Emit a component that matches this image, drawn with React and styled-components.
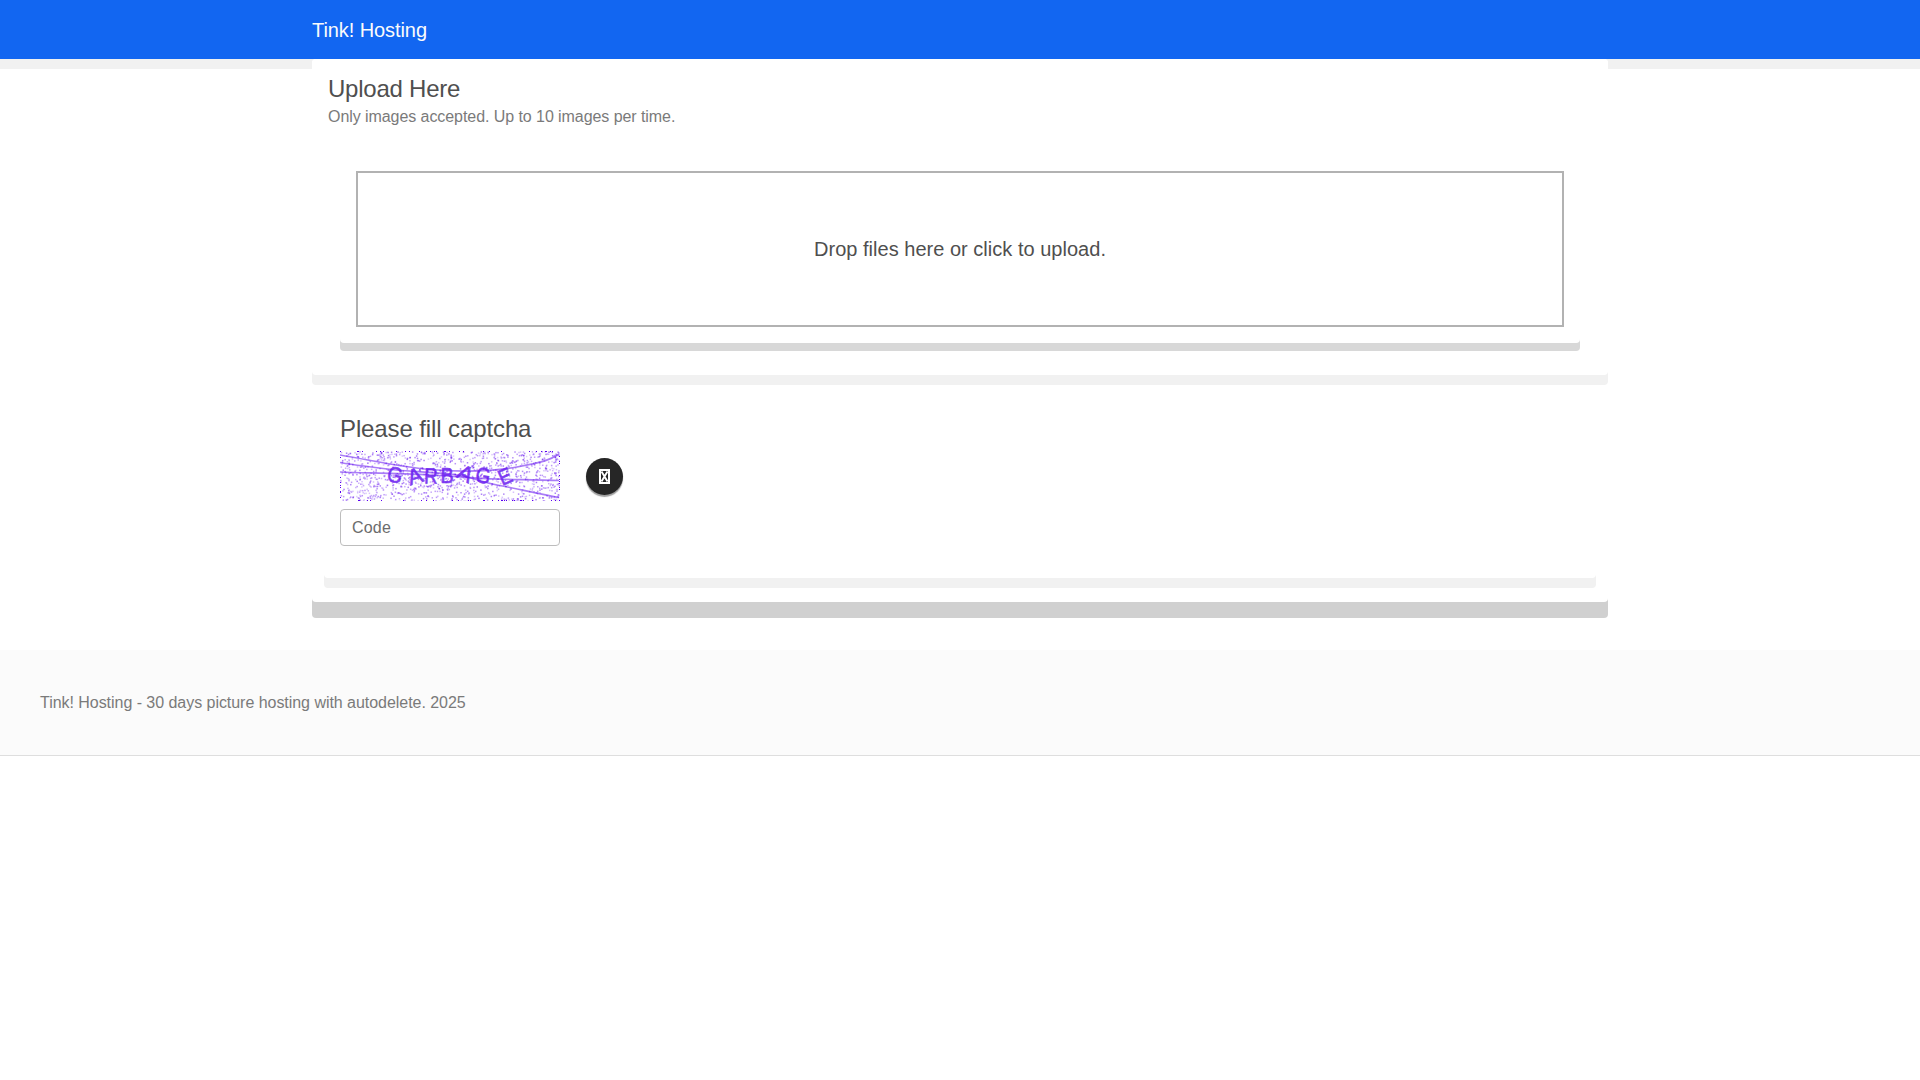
import React from "react";
import styled, { createGlobalStyle } from "styled-components";

const Global = createGlobalStyle`
  *, *::before, *::after { box-sizing: border-box; }
  body {
    margin: 0;
    background: #fff;
    color: #4f4f4f;
    font: 16px/24px "Liberation Sans", Arial, sans-serif;
  }
  h1, h2, p { margin: 0; font-weight: 400; }
`;

const Header = styled.header`
  height: 59px;
  background: #1266f1;
  box-shadow: 0 10px 0 #f1f1f1;
`;

const Container = styled.div`
  width: 1296px;
  margin: 0 auto;
`;

const Brand = styled.a`
  display: block;
  padding-top: 15px;
  font-size: 20px;
  line-height: 30px;
  letter-spacing: -0.08px;
  color: #fbfbfb;
`;

const Card = styled.section`
  background: #fff;
  border-radius: 4px;
  box-shadow: 0 ${(p) => p.$depth}px 0 ${(p) => p.$shade};
`;

const Page = styled(Container)`
  position: relative;
  margin-bottom: 48px;
`;

const PageCard = styled(Card)`
  height: 543px;
`;

const UploadCard = styled(Card)`
  height: 316px;
  padding: 15px 28px 0;
`;

const Title = styled.h1`
  font-size: 24px;
  line-height: 29px;
  letter-spacing: ${(p) => p.$tracking}px;
`;

const Intro = styled.div`
  margin-left: -12px;
`;

const Muted = styled.p`
  color: #7a7a7a;
  letter-spacing: ${(p) => p.$tracking}px;
`;

const IntroText = styled(Muted)`
  margin-top: 2px;
`;

const DropCard = styled(Card)`
  height: 188px;
  margin-top: 26px;
  padding: 16px;
`;

const DropArea = styled.div`
  display: flex;
  align-items: center;
  justify-content: center;
  height: 156px;
  border: 2px solid #b2b2b2;
  font-size: 20px;
  letter-spacing: 0.02px;
`;

const CaptchaCard = styled(Card)`
  height: 177px;
  margin: 26px 12px 0;
  padding: 13px 16px 0;
`;

const CaptchaRow = styled.div`
  display: flex;
  align-items: flex-start;
  margin-top: 8px;
  gap: 26px;
`;

const Picture = styled.svg`
  display: block;
  width: 220px;
  height: 50px;
  background: #fff;
`;

const Letter = styled.text`
  font: 22px "Liberation Sans", Arial, sans-serif;
  fill: #6a1cf0;
  stroke: #6a1cf0;
  stroke-width: 0.6px;
  text-anchor: middle;
  opacity: 0.85;
`;

const Refresh = styled.button`
  display: flex;
  align-items: center;
  justify-content: center;
  width: 37px;
  height: 37px;
  margin-top: 7px;
  padding: 0;
  border: 0;
  border-radius: 50%;
  background: #262626;
  box-shadow: 0 2px 1px rgba(0, 0, 0, 0.38);
`;

const CodeInput = styled.input`
  display: block;
  width: 220px;
  height: 37px;
  margin-top: 8px;
  padding: 0 11px;
  border: 1px solid #bdbdbd;
  border-radius: 4px;
  font: inherit;
  letter-spacing: 0.2px;
  &::placeholder { color: #6c6c6c; opacity: 1; }
`;

const Footer = styled.footer`
  height: 106px;
  padding: 41px 40px 0;
  background: #fbfbfb;
  border-bottom: 1px solid #dedede;
`;

const rand = (() => {
  let s = 90721;
  return () => {
    s = (s * 16807) % 2147483647;
    return s / 2147483647;
  };
})();

const SPECKS = Array.from({ length: 1150 }, () => ({
  x: rand() * 220,
  y: rand() * 50,
  o: 0.2 + rand() * 0.35,
}));

const EDGE = [
  ...Array.from({ length: 30 }, () => ({ x: Math.floor(rand() * 220), y: 0 })),
  ...Array.from({ length: 30 }, () => ({ x: Math.floor(rand() * 220), y: 49 })),
  ...Array.from({ length: 9 }, () => ({ x: 0, y: Math.floor(rand() * 50) })),
  ...Array.from({ length: 9 }, () => ({ x: 219, y: Math.floor(rand() * 50) })),
];

const WAVES = [
  "M0 4C30 9 60 16 90 18.500S150 21 177 16S210 9 219 3",
  "M0 11.500C20 15 38 17 56 19S98 21 117 24S140 31 157 34S200 43 219 46.500",
  "M0 21C30 22 60 22.500 90 24S135 27.500 157 28S200 29.500 219 29.500",
];

const LETTERS = [
  { c: "G", x: 55, y: 24, r: 12, w: 0.88 },
  { c: "A", x: 75, y: 25, r: -18, w: 1 },
  { c: "R", x: 91, y: 25, r: 2, w: 0.85 },
  { c: "B", x: 107, y: 24.5, r: 0, w: 0.9 },
  { c: "A", x: 125.5, y: 22.5, r: 28, w: 1 },
  { c: "G", x: 143, y: 24.5, r: 8, w: 0.86 },
  { c: "E", x: 165, y: 25.5, r: -24, w: 0.88 },
];

function Captcha() {
  return (
    <Picture viewBox="0 0 220 50" role="img">
      {SPECKS.map((p, i) => (
        <rect key={i} x={p.x} y={p.y} width="1.5" height="1.5" fill="#6512f0" opacity={p.o} />
      ))}
      {WAVES.map((d) => (
        <path key={d} d={d} fill="none" stroke="#6512f0" strokeWidth="1.7" opacity="0.55" />
      ))}
      {LETTERS.map((l, i) => (
        <Letter key={i} y="7.500" transform={`translate(${l.x} ${l.y}) rotate(${l.r}) scale(${l.w} 1)`}>
          {l.c}
        </Letter>
      ))}
      {EDGE.map((p, i) => (
        <rect key={i} x={p.x} y={p.y} width="1" height="1" fill="#5a00f0" />
      ))}
    </Picture>
  );
}

function MissingIcon() {
  return (
    <svg width="11" height="15" viewBox="0 0 11 15">
      <rect x="1" y="1" width="9" height="13" fill="none" stroke="#fff" strokeWidth="2" />
      <path d="M2.500 2.500l6 10M8.500 2.500l-6 10" stroke="#fff" strokeWidth="1.9" />
    </svg>
  );
}

export default function App() {
  return (
    <>
      <Global />
      <Header>
        <Container>
          <Brand>Tink! Hosting</Brand>
        </Container>
      </Header>
      <Page as="main">
        <PageCard $depth={16} $shade="#d0d0d0">
          <UploadCard $depth={10} $shade="#f1f1f1">
            <Intro>
              <Title $tracking={-0.23}>Upload Here</Title>
              <IntroText $tracking={-0.065}>Only images accepted. Up to 10 images per time.</IntroText>
            </Intro>
            <DropCard $depth={8} $shade="#d8d8d8">
              <DropArea>Drop files here or click to upload.</DropArea>
            </DropCard>
          </UploadCard>
          <CaptchaCard $depth={10} $shade="#f1f1f1">
            <Title as="h2" $tracking={-0.11}>Please fill captcha</Title>
            <CaptchaRow>
              <Captcha />
              <Refresh>
                <MissingIcon />
              </Refresh>
            </CaptchaRow>
            <CodeInput placeholder="Code" />
          </CaptchaCard>
        </PageCard>
      </Page>
      <Footer>
        <Muted $tracking={-0.04}>Tink! Hosting - 30 days picture hosting with autodelete. 2025</Muted>
      </Footer>
    </>
  );
}
